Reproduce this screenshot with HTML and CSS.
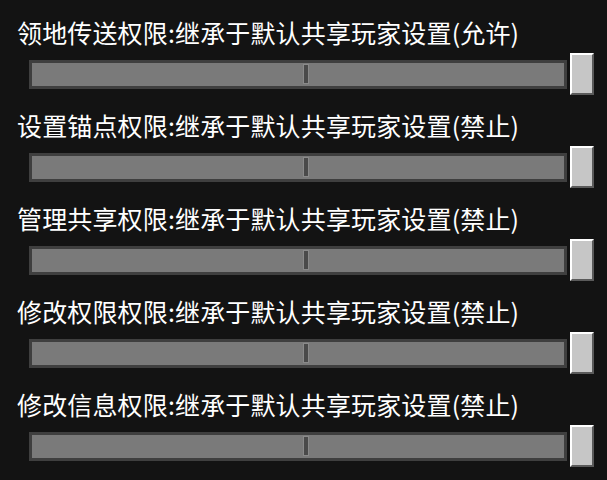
FILE: index.html
```html
<!DOCTYPE html>
<html lang="zh-CN">
<head>
<meta charset="utf-8">
<link rel="stylesheet" href="styles.css">
</head>
<body>
<div class="page">
  <div class="row">
    <div class="label">领地传送权限:继承于默认共享玩家设置(允许)</div>
    <div class="slider"><div class="track"><span class="mark"></span></div><div class="thumb"></div></div>
  </div>
  <div class="row">
    <div class="label">设置锚点权限:继承于默认共享玩家设置(禁止)</div>
    <div class="slider"><div class="track"><span class="mark"></span></div><div class="thumb"></div></div>
  </div>
  <div class="row">
    <div class="label">管理共享权限:继承于默认共享玩家设置(禁止)</div>
    <div class="slider"><div class="track"><span class="mark"></span></div><div class="thumb"></div></div>
  </div>
  <div class="row">
    <div class="label">修改权限权限:继承于默认共享玩家设置(禁止)</div>
    <div class="slider"><div class="track"><span class="mark"></span></div><div class="thumb"></div></div>
  </div>
  <div class="row">
    <div class="label">修改信息权限:继承于默认共享玩家设置(禁止)</div>
    <div class="slider"><div class="track"><span class="mark"></span></div><div class="thumb"></div></div>
  </div>
</div>
</body>
</html>
```
FILE: styles.css
```css
html, body {
  margin: 0;
  padding: 0;
  background: #131313;
}
body {
  width: 607px;
  height: 480px;
  overflow: hidden;
  font-family: "Noto Sans CJK SC", "Noto Sans", sans-serif;
  color: #ffffff;
}
.page {
  padding: 12px 13px 0 17px;
  border-left: 4px solid #1d1d1d;
  margin-left: -4px;
  display: flex;
  flex-direction: column;
  gap: 10px;
}
.row {
  display: flex;
  flex-direction: column;
}
.label {
  height: 41px;
  line-height: 41px;
  font-size: 25px;
  letter-spacing: 0.15px;
  white-space: nowrap;
}
.slider {
  display: flex;
  align-items: center;
  gap: 3px;
  height: 42px;
  margin-left: 12px;
}
.track {
  position: relative;
  flex: 1;
  height: 23px;
  background: #7a7a7a;
  border: 3px solid #3f3f3f;
}
.mark {
  position: absolute;
  left: 271px;
  top: 1px;
  width: 4px;
  height: 18px;
  background: #4a4a4a;
  border: 1px solid #8a8a8a;
}
.thumb {
  box-sizing: border-box;
  width: 24px;
  height: 42px;
  background: #c6c6c6;
  border-top: 2px solid #ffffff;
  border-left: 2px solid #ffffff;
  border-right: 2px solid #5a5a5a;
  border-bottom: 2px solid #5a5a5a;
}
```
